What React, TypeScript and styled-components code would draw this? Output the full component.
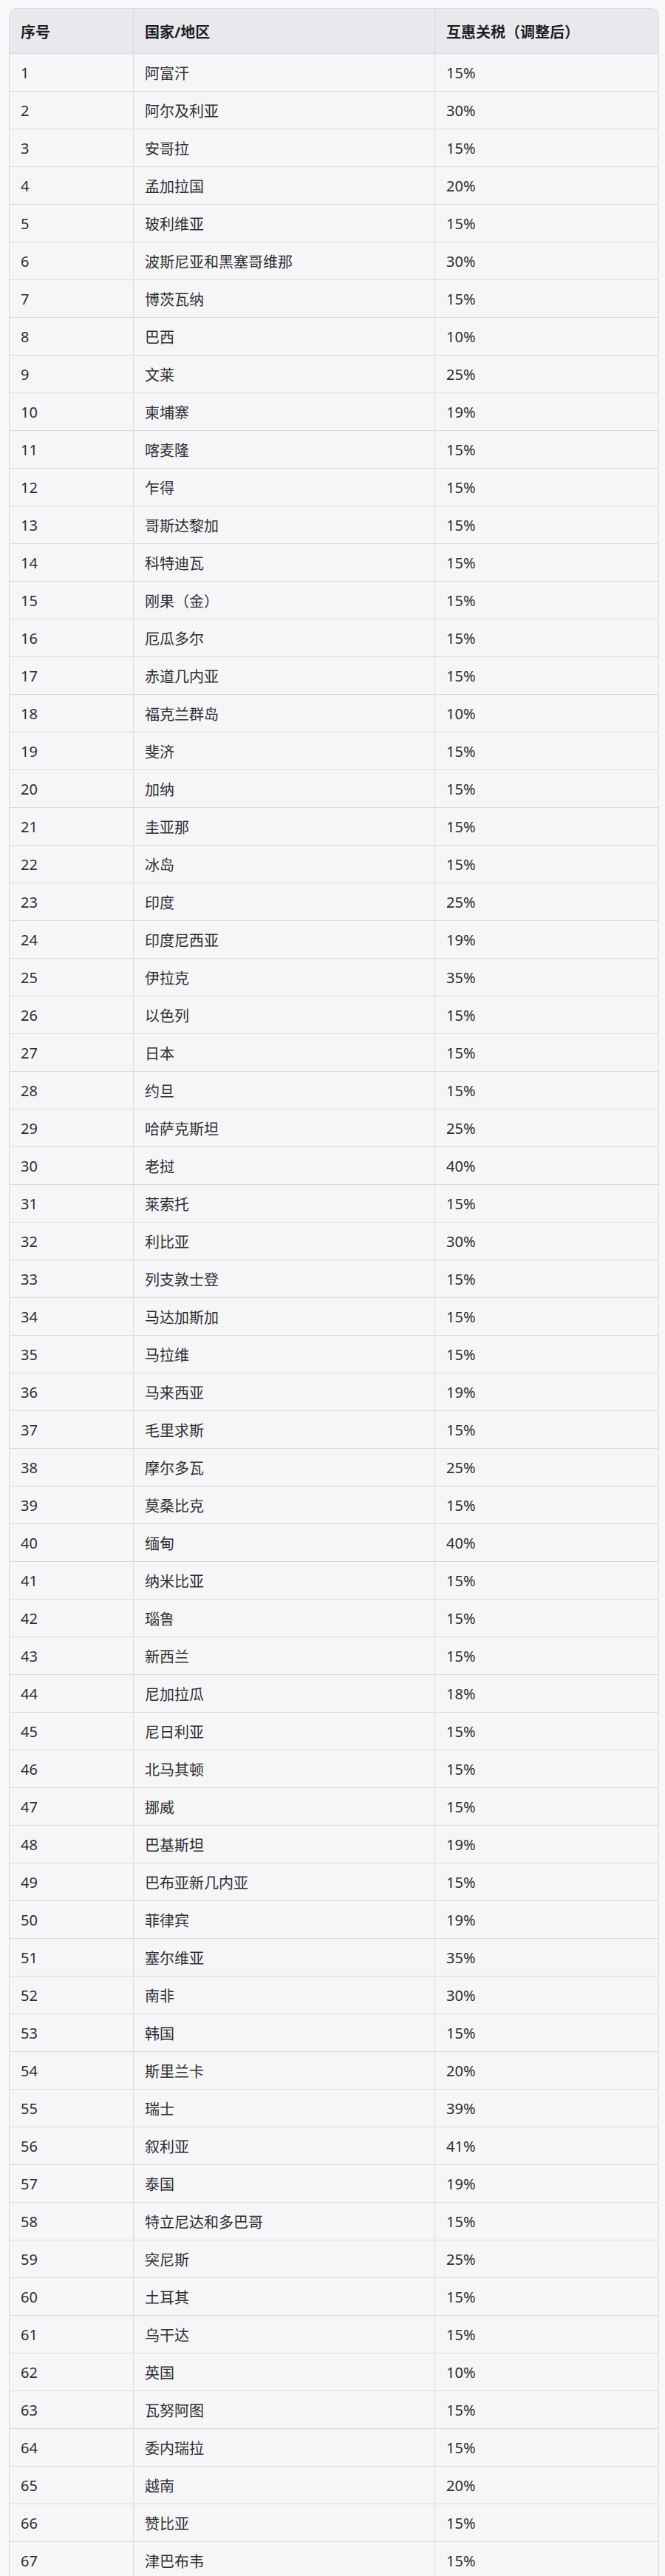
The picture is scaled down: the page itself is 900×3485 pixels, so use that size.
import React from 'react'
import styled, { createGlobalStyle } from 'styled-components'

//DATA
type Row = [string, string]

const ROWS: Row[] = [
  ['阿富汗', '15%'],
  ['阿尔及利亚', '30%'],
  ['安哥拉', '15%'],
  ['孟加拉国', '20%'],
  ['玻利维亚', '15%'],
  ['波斯尼亚和黑塞哥维那', '30%'],
  ['博茨瓦纳', '15%'],
  ['巴西', '10%'],
  ['文莱', '25%'],
  ['柬埔寨', '19%'],
  ['喀麦隆', '15%'],
  ['乍得', '15%'],
  ['哥斯达黎加', '15%'],
  ['科特迪瓦', '15%'],
  ['刚果（金）', '15%'],
  ['厄瓜多尔', '15%'],
  ['赤道几内亚', '15%'],
  ['福克兰群岛', '10%'],
  ['斐济', '15%'],
  ['加纳', '15%'],
  ['圭亚那', '15%'],
  ['冰岛', '15%'],
  ['印度', '25%'],
  ['印度尼西亚', '19%'],
  ['伊拉克', '35%'],
  ['以色列', '15%'],
  ['日本', '15%'],
  ['约旦', '15%'],
  ['哈萨克斯坦', '25%'],
  ['老挝', '40%'],
  ['莱索托', '15%'],
  ['利比亚', '30%'],
  ['列支敦士登', '15%'],
  ['马达加斯加', '15%'],
  ['马拉维', '15%'],
  ['马来西亚', '19%'],
  ['毛里求斯', '15%'],
  ['摩尔多瓦', '25%'],
  ['莫桑比克', '15%'],
  ['缅甸', '40%'],
  ['纳米比亚', '15%'],
  ['瑙鲁', '15%'],
  ['新西兰', '15%'],
  ['尼加拉瓜', '18%'],
  ['尼日利亚', '15%'],
  ['北马其顿', '15%'],
  ['挪威', '15%'],
  ['巴基斯坦', '19%'],
  ['巴布亚新几内亚', '15%'],
  ['菲律宾', '19%'],
  ['塞尔维亚', '35%'],
  ['南非', '30%'],
  ['韩国', '15%'],
  ['斯里兰卡', '20%'],
  ['瑞士', '39%'],
  ['叙利亚', '41%'],
  ['泰国', '19%'],
  ['特立尼达和多巴哥', '15%'],
  ['突尼斯', '25%'],
  ['土耳其', '15%'],
  ['乌干达', '15%'],
  ['英国', '10%'],
  ['瓦努阿图', '15%'],
  ['委内瑞拉', '15%'],
  ['越南', '20%'],
  ['赞比亚', '15%'],
  ['津巴布韦', '15%'],
]

//STYLES
const GlobalStyle = createGlobalStyle`
  html, body {
    margin: 0;
    padding: 0;
    background: #f8f8fa;
  }
  body {
    font-family: 'Noto Sans', 'Noto Sans CJK SC', sans-serif;
    color: #2b2b2e;
  }
`

const Page = styled.div`
  padding: 11px 8px 0 12px;
`

const TableWrap = styled.div`
  border: 1px solid #d9d9de;
  border-bottom: none;
  border-radius: 11px 11px 0 0;
  overflow: hidden;
  background: #f6f6f8;
`

const Table = styled.table`
  width: 100%;
  border-collapse: separate;
  border-spacing: 0;
  table-layout: fixed;
  font-size: 20px;
`

const HeadCell = styled.th<{ $w: number; $last?: boolean }>`
  width: ${(p) => p.$w}px;
  height: 60px;
  padding: 0 15px;
  text-align: left;
  font-weight: 700;
  color: #1f1f22;
  background: #e9e9ed;
  border-right: ${(p) => (p.$last ? 'none' : '1px solid #d9d9de')};
  box-sizing: border-box;
`

const Cell = styled.td<{ $last?: boolean }>`
  height: 50px;
  padding: 0 15px;
  border-top: 1px solid #dadade;
  border-right: ${(p) => (p.$last ? 'none' : '1px solid #d9d9de')};
  color: #2e2e31;
  white-space: nowrap;
`

//MAIN COMPONENT
export default function App() {
  return (
    <>
      <GlobalStyle />
      <Page>
        <TableWrap>
          <Table>
            <thead>
              <tr>
                <HeadCell $w={168}>序号</HeadCell>
                <HeadCell $w={408}>国家/地区</HeadCell>
                <HeadCell $w={302} $last>互惠关税（调整后）</HeadCell>
              </tr>
            </thead>
            <tbody>
              {ROWS.map(([name, rate], i) => (
                <tr key={name}>
                  <Cell>{i + 1}</Cell>
                  <Cell>{name}</Cell>
                  <Cell $last>{rate}</Cell>
                </tr>
              ))}
            </tbody>
          </Table>
        </TableWrap>
      </Page>
    </>
  )
}
